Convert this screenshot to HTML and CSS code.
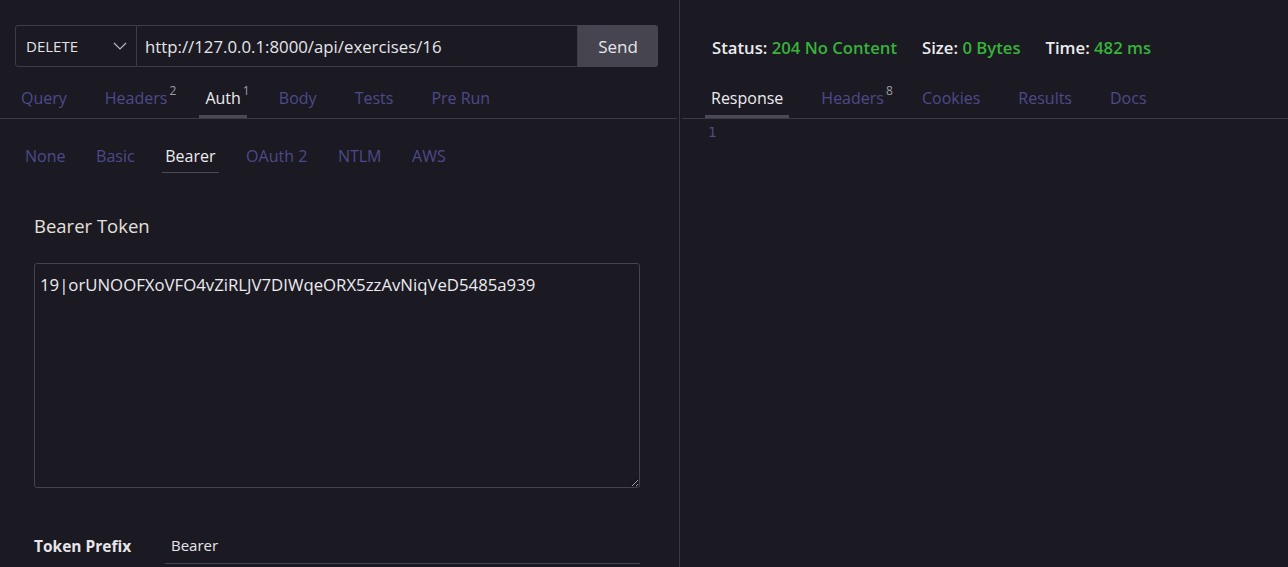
FILE: index.html
```html
<!DOCTYPE html>
<html lang="en">
<head>
<meta charset="utf-8">
<title>Thunder Client</title>
<link rel="stylesheet" href="styles.css">
</head>
<body>
<div class="app">
  <section class="pane pane-left">
    <div class="urlbar">
      <div class="method">
        <span>DELETE</span>
        <svg class="chev" width="14" height="8" viewBox="0 0 14 8"><path d="M1 1 L7 7 L13 1" fill="none" stroke="#b8b8c0" stroke-width="1.2"/></svg>
      </div>
      <div class="url">http://127.0.0.1:8000/api/exercises/16</div>
      <button class="send">Send</button>
    </div>
    <nav class="tabs">
      <span class="tab">Query</span>
      <span class="tab">Headers<sup class="count">2</sup></span>
      <span class="tab active">Auth<sup class="count">1</sup></span>
      <span class="tab">Body</span>
      <span class="tab">Tests</span>
      <span class="tab">Pre Run</span>
    </nav>
    <nav class="subtabs">
      <span class="subtab">None</span>
      <span class="subtab">Basic</span>
      <span class="subtab active">Bearer</span>
      <span class="subtab">OAuth 2</span>
      <span class="subtab">NTLM</span>
      <span class="subtab">AWS</span>
    </nav>
    <div class="auth">
      <div class="label">Bearer Token</div>
      <textarea class="token" spellcheck="false">19|orUNOOFXoVFO4vZiRLJV7DIWqeORX5zzAvNiqVeD5485a939</textarea>
      <div class="prefix-row">
        <span class="prefix-label">Token Prefix</span>
        <div class="prefix-input">Bearer</div>
      </div>
    </div>
  </section>
  <section class="pane pane-right">
    <div class="status">
      <span class="stat"><b>Status:</b> <em>204 No Content</em></span>
      <span class="stat"><b>Size:</b> <em>0 Bytes</em></span>
      <span class="stat"><b>Time:</b> <em>482 ms</em></span>
    </div>
    <nav class="tabs tabs-right">
      <span class="tab active">Response</span>
      <span class="tab">Headers<sup class="count">8</sup></span>
      <span class="tab">Cookies</span>
      <span class="tab">Results</span>
      <span class="tab">Docs</span>
    </nav>
    <div class="editor">
      <span class="lineno">1</span>
    </div>
  </section>
</div>
</body>
</html>
```

FILE: styles.css
```css
* { box-sizing: border-box; }

html, body {
  margin: 0;
  height: 100%;
  background: #1b1922;
  color: #e6e6ea;
  font-family: "Segoe UI", "Open Sans", "Noto Sans", sans-serif;
  overflow: hidden;
}

.app {
  display: flex;
  height: 567px;
}

.pane-left {
  width: 680px;
  border-right: 1px solid #3a3944;
  display: flex;
  flex-direction: column;
}

.pane-right {
  flex: 1;
  padding-left: 2px;
  display: flex;
  flex-direction: column;
}

/* URL bar */
.urlbar {
  display: flex;
  height: 42px;
  margin: 25px 21px 0 15px;
}

.method {
  width: 122px;
  border: 1px solid #3d3c47;
  border-radius: 3px 0 0 3px;
  display: flex;
  align-items: center;
  justify-content: space-between;
  padding: 0 9px 0 10px;
  font-size: 15px;
  color: #e2e2e6;
}

.url {
  flex: 1;
  border: 1px solid #3d3c47;
  border-left: none;
  display: flex;
  align-items: center;
  padding-left: 8px;
  font-size: 16.8px;
  color: #e6e6ea;
}

.send {
  width: 80px;
  border: none;
  border-radius: 0 3px 3px 0;
  background: #45444f;
  color: #e6e6ea;
  font-family: inherit;
  font-size: 17px;
  padding: 0;
}

/* Tabs */
.tabs {
  display: flex;
  gap: 26px;
  margin: 10px 2px 0 0;
  padding-left: 15px;
  border-bottom: 1px solid #3b3a45;
}

.tabs-right {
  margin: 0;
  padding-left: 23px;
}

.tab {
  position: relative;
  height: 41px;
  padding: 10px 6px 0;
  border-bottom: 3px solid transparent;
  font-size: 16px;
  line-height: 22px;
  color: #4d4a8a;
}

.tab.active {
  color: #ececf0;
  border-bottom-color: #4a4955;
}

.count {
  position: absolute;
  top: 7px;
  left: calc(100% - 4px);
  font-size: 12px;
  line-height: 14px;
  color: #9d9ca8;
}

/* Sub tabs */
.subtabs {
  display: flex;
  gap: 24.6px;
  margin-top: 26px;
  padding-left: 22px;
}

.subtab {
  padding: 0 3px 5px;
  border-bottom: 1px solid transparent;
  font-size: 16px;
  line-height: 22px;
  color: #4d4a8a;
}

.subtab.active {
  color: #ececf0;
  border-bottom-color: #4a4955;
}

/* Auth form */
.auth {
  display: flex;
  flex-direction: column;
  padding: 40px 39px 0 34px;
}

.label {
  font-size: 18.5px;
  line-height: 26px;
  color: #e4e1da;
}

.token {
  margin-top: 24px;
  height: 225px;
  width: 606px;
  background: #1b1922;
  color: #ececf0;
  border: 1px solid #45434f;
  border-radius: 3px;
  padding: 10px 5px;
  font-family: inherit;
  font-size: 16.75px;
  line-height: 22px;
  resize: vertical;
  color-scheme: dark;
  outline: none;
}

.prefix-row {
  display: flex;
  align-items: stretch;
  margin-top: 40px;
  height: 36px;
}

.prefix-label {
  width: 131px;
  font-size: 15.5px;
  font-weight: 700;
  display: flex;
  align-items: center;
  padding-bottom: 1px;
  color: #e6e6ea;
}

.prefix-input {
  flex: 1;
  display: flex;
  align-items: center;
  padding-left: 6px;
  padding-bottom: 1px;
  border-bottom: 1px solid #45434f;
  font-size: 15px;
  color: #e6e6ea;
}

/* Status */
.status {
  display: flex;
  gap: 25px;
  height: 46px;
  margin-top: 24px;
  padding-left: 30px;
  align-items: center;
  font-size: 16.7px;
}

.stat b {
  font-weight: 600;
  color: #ececf0;
}

.stat em {
  font-style: normal;
  font-weight: 600;
  color: #36b33a;
}

.status + .tabs-right {
  margin-top: 7px;
}

.editor {
  padding: 1px 0 0 26px;
}

.lineno {
  font-family: "DejaVu Sans Mono", "Liberation Mono", monospace;
  font-size: 14px;
  line-height: 22px;
  color: #4d4a8a;
}
```
